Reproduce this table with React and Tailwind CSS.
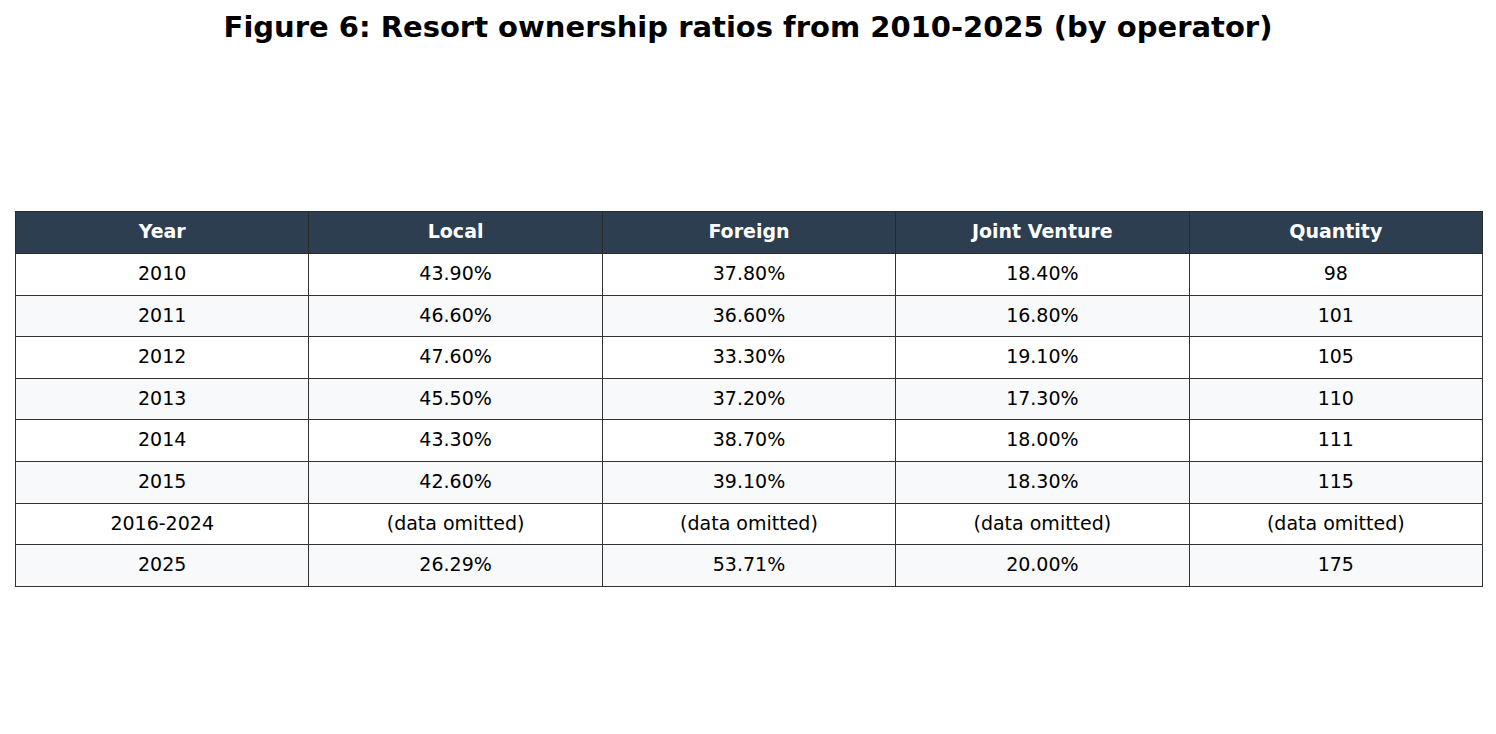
import React from "react";

const header = ["Year", "Local", "Foreign", "Joint Venture", "Quantity"];
const rows = [
  ["2010", "43.90%", "37.80%", "18.40%", "98"],
  ["2011", "46.60%", "36.60%", "16.80%", "101"],
  ["2012", "47.60%", "33.30%", "19.10%", "105"],
  ["2013", "45.50%", "37.20%", "17.30%", "110"],
  ["2014", "43.30%", "38.70%", "18.00%", "111"],
  ["2015", "42.60%", "39.10%", "18.30%", "115"],
  ["2016-2024", "(data omitted)", "(data omitted)", "(data omitted)", "(data omitted)"],
  ["2025", "26.29%", "53.71%", "20.00%", "175"],
];

export default function App() {
  return (
    <div className="w-[1496px] h-[734px] bg-white flex flex-col" style={{ fontFamily: '"DejaVu Sans", sans-serif' }}>
      <div className="h-[56px] flex items-center justify-center pb-[1px]">
        <h1 className="text-[29px] font-bold text-black leading-none">
          Figure 6: Resort ownership ratios from 2010-2025 (by operator)
        </h1>
      </div>
      <div className="pt-[155px] pl-[15px]">
        <table className="w-[1468px] border-collapse table-fixed">
          <thead>
            <tr className="bg-[#2c3e50] h-[42px]">
              {header.map((h) => (
                <th key={h} className="border border-[#2a2a2a] text-white font-bold text-[19px] text-center p-0 pb-[2px]">
                  {h}
                </th>
              ))}
            </tr>
          </thead>
          <tbody>
            {rows.map((r, i) => (
              <tr key={i} className={i % 2 === 1 ? "bg-[#f8f9fa] h-[41.6px]" : "bg-white h-[41.6px]"}>
                {r.map((c, j) => (
                  <td key={j} className="border border-[#333333] text-black text-[19px] text-center p-0 pb-[2px]">
                    {c}
                  </td>
                ))}
              </tr>
            ))}
          </tbody>
        </table>
      </div>
    </div>
  );
}
